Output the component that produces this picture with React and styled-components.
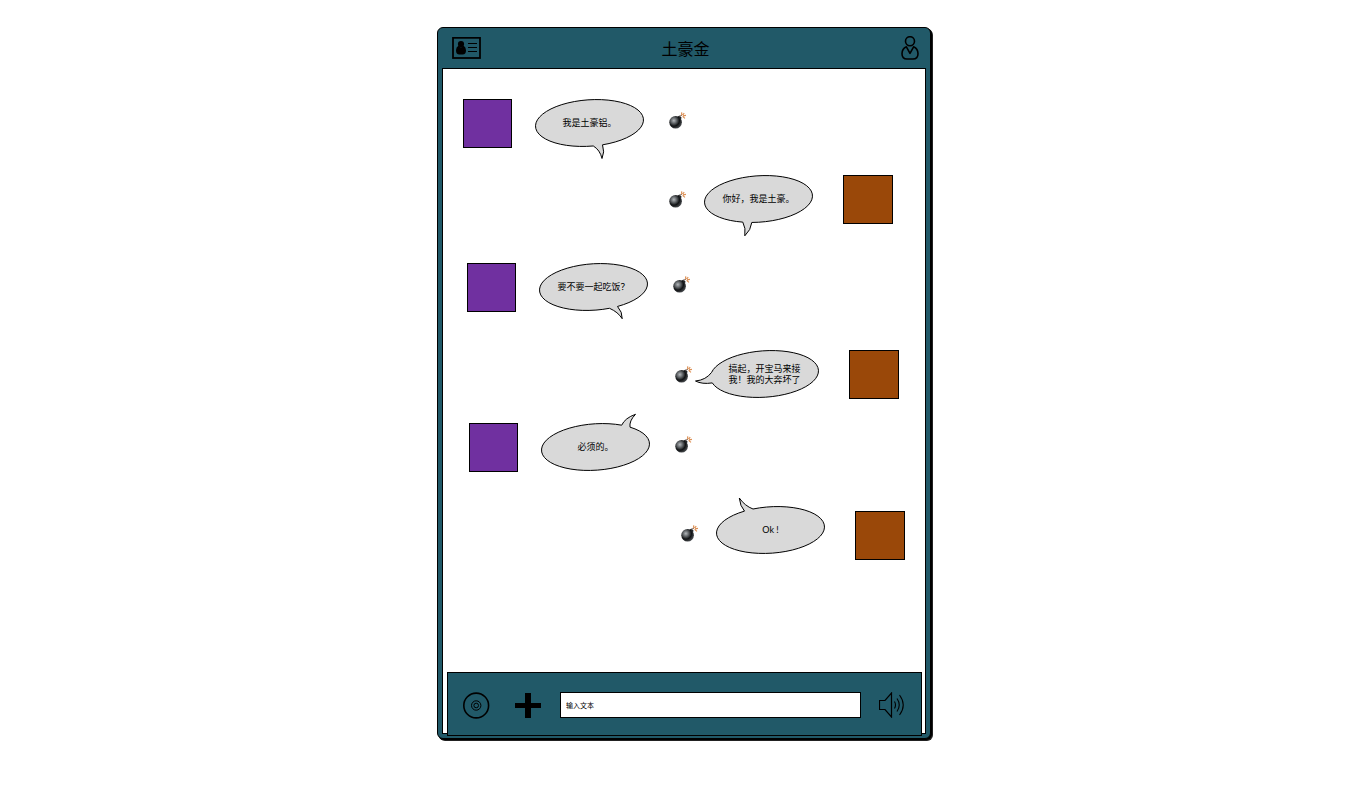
import React from "react";
import styled, { createGlobalStyle } from "styled-components";

const TEAL = "#215968";

const GlobalStyle = createGlobalStyle`
  * { box-sizing: border-box; }
  body {
    margin: 0;
    background: #fff;
    color: #000;
    font-family: "Noto Sans CJK SC", sans-serif;
  }
`;

const Page = styled.main`
  display: flex;
  justify-content: center;
  padding: 27px 0 27px 2px;
`;

const Phone = styled.section`
  display: flex;
  flex-direction: column;
  width: 100%;
  max-width: 494px;
  min-height: 712px;
  padding: 0 4px 4px;
  background: ${TEAL};
  border: 1px solid #000;
  border-radius: 6px;
  box-shadow: 1px 1px 0 #000, 2px 2px 0 #222;
`;

const Header = styled.header`
  display: grid;
  grid-template-columns: 1fr auto 1fr;
  align-items: center;
  height: 40px;
  padding: 0 7px 0 10px;
  button:last-child { justify-self: end; }
`;

const Title = styled.h1`
  margin: 0;
  font-size: 16px;
  line-height: 24px;
  font-weight: 400;
`;

const IconButton = styled.button`
  display: flex;
  flex: none;
  padding: 0;
  border: 0;
  background: none;
  color: #000;
  cursor: pointer;
  svg { display: block; }
`;

const Screen = styled.div`
  display: flex;
  flex: 1;
  flex-direction: column;
  background: #fff;
  border: 1px solid #000;
`;

const Messages = styled.ol`
  flex: 1;
  margin: 0;
  padding: 30px 20px 24px;
  list-style: none;
`;

const Row = styled.li`
  display: flex;
  flex-direction: ${(p) => (p.$mine ? "row-reverse" : "row")};
  align-items: flex-start;
  height: ${(p) => (p.$tall ? 54 : 49)}px;
  margin-top: ${(p) => p.$space}px;
  padding: ${(p) => (p.$mine ? `0 ${p.$inset}px 0 0` : `0 0 0 ${p.$inset}px`)};
`;

const Avatar = styled.div`
  flex: none;
  align-self: ${(p) => (p.$mine ? "flex-end" : "flex-start")};
  width: ${(p) => (p.$mine ? 50 : 49)}px;
  height: 49px;
  background: ${(p) => (p.$mine ? "#9a4809" : "#7030a0")};
  border: 1px solid #000;
`;

const Bubble = styled.div`
  position: relative;
  display: flex;
  flex: none;
  align-items: center;
  justify-content: center;
  width: 109px;
  height: 47px;
  margin: ${(p) => (p.$mine ? "0 30px 0 18px" : "0 25px 0 23px")};
`;

const BubbleShape = styled.svg`
  position: absolute;
  inset: 0;
  overflow: visible;
`;

const BubbleText = styled.p`
  position: relative;
  margin: 0;
  font-family: Lato, "Noto Sans CJK SC", sans-serif;
  font-size: 9px;
  line-height: 11px;
  white-space: pre-line;
`;

const BombSlot = styled.div`
  flex: none;
  align-self: ${(p) => (p.$mine ? "center" : "flex-start")};
  padding-top: ${(p) => (p.$mine ? 0 : 13)}px;
  svg { display: block; }
`;

const Composer = styled.form`
  position: relative;
  display: flex;
  align-items: center;
  height: 64px;
  margin: 0 3px -3px 4px;
  padding: 2px 16px 0 15px;
  background: ${TEAL};
  border: 1px solid #000;
`;

const Tools = styled.div`
  display: flex;
  align-items: center;
  gap: 25px;
`;

const TextBox = styled.input`
  flex: 1;
  min-width: 0;
  height: 26px;
  margin: 0 18px 0 19px;
  padding: 0 5px;
  border: 1px solid #000;
  border-radius: 0;
  background: #fff;
  color: #000;
  font: 7px "Noto Sans CJK SC", sans-serif;
  &::placeholder { color: #000; opacity: 1; }
`;

const MESSAGES = [
  { text: "我是土豪铝。", inset: 0, space: 0,
    tail: { side: 1, from: 58.3, to: 67.5, curve: "Q70 53 67 59.5Q65 51" } },
  { text: "你好，我是土豪。", mine: true, inset: 12, space: 27,
    tail: { side: 1, from: 38.8, to: 47.8, curve: "Q47 55 40.8 60.8Q42 53" } },
  { text: "要不要一起吃饭？", inset: 4, space: 39,
    tail: { side: 1, from: 70.5, to: 78.5, curve: "Q83.5 49 83.2 55.7Q79 49" } },
  { text: "搞起，开宝马来接\n我！我的大奔坏了", mine: true, inset: 6, space: 38,
    tail: { side: -1, endSide: 1, from: 1.6, to: 2.3, curve: "Q-8 34.5 -14.5 31Q-4 30" } },
  { text: "必须的。", inset: 6, space: 24,
    tail: { side: -1, from: 89, to: 80.7, curve: "Q84 -5 94.5 -8.7Q88 -2" } },
  { text: "Ok !", mine: true, tall: true, inset: 0, space: 34,
    tail: { side: -1, from: 37, to: 28.5, curve: "Q24 0 23.3 -8Q29 0" } },
];

/* Slightly tilted ellipse, open between the two feet of its tail. */
const CENTER = { x: 54.5, y: 24 };
const HALF_WIDTH = 54.1;
const HALF_HEIGHT = 23.2;
const TILT = 4;

function edgeY(x, side) {
  const t = (TILT * Math.PI) / 180;
  const a2 = HALF_WIDTH ** 2;
  const b2 = HALF_HEIGHT ** 2;
  const w2 = a2 * Math.cos(t) ** 2 + b2 * Math.sin(t) ** 2;
  const dx = x - CENTER.x;
  const skew = ((a2 - b2) * Math.sin(t) * Math.cos(t)) / w2;
  const reach = HALF_WIDTH * HALF_HEIGHT * Math.sqrt(Math.max(0, w2 - dx * dx)) / w2;
  return CENTER.y - skew * dx + side * reach;
}

function bubblePath({ side, endSide = side, from, to, curve }) {
  const startY = edgeY(from, side);
  const endY = edgeY(to, endSide);
  return `M${from} ${startY}A${HALF_WIDTH} ${HALF_HEIGHT} ${-TILT} 1 1 ${to} ${endY}${curve} ${from} ${startY}Z`;
}

function BombIcon({ id }) {
  return (
    <svg width="17" height="17" viewBox="0 0 17 17" aria-hidden="true">
      <defs>
        <radialGradient id={id} cx="0.36" cy="0.36" r="0.68">
          <stop offset="0" stopColor="#b4b8bc" />
          <stop offset="0.35" stopColor="#5d6164" />
          <stop offset="0.65" stopColor="#101214" />
          <stop offset="1" stopColor="#4a4d50" />
        </radialGradient>
      </defs>
      <path d="M8.6 4.4L10.6 3.6L12.6 5.8L11.8 7.6Z" fill="#222629" />
      <circle cx="6.6" cy="10.3" r="6.3" fill={`url(#${id})`} />
      <path d="M10.6 4.4Q11.5 2.8 13 3.6" fill="none" stroke="#8a7068" />
      <path d="M12.8 3.4L12.6 0.4M13.8 3L15.2 1.2M14 3.8L17 3.4M13.6 4.4L16 6.4" stroke="#dc9055" strokeWidth="1.2" />
    </svg>
  );
}

function ContactCardIcon() {
  return (
    <svg width="29" height="22" viewBox="0 0 29 22" aria-hidden="true">
      <rect x="1" y="0.8" width="27" height="20.2" fill="none" stroke="currentColor" strokeWidth="1.8" />
      <circle cx="9" cy="7" r="3.1" fill="currentColor" />
      <path d="M6.6 8.6Q4 10.2 4 13.3Q4 17.6 7.4 17.6H10.6Q14 17.6 14 13.3Q14 10.2 11.4 8.6L9 10.4Z" fill="currentColor" />
      <path d="M16 6.5H25M16 10.5H25M16 14.5H25" stroke="currentColor" />
    </svg>
  );
}

function PersonIcon() {
  return (
    <svg width="18" height="25" viewBox="0 0 18 25" fill="none" stroke="currentColor" strokeWidth="1.6" aria-hidden="true">
      <circle cx="9" cy="5.2" r="4.5" />
      <path d="M5.4 10.8Q1 12.8 1 17.8Q1 23 6 23H12Q17 23 17 17.8Q17 12.8 12.6 10.8L9 17.3Z" strokeLinejoin="round" />
    </svg>
  );
}

function VoiceIcon() {
  return (
    <svg width="27" height="27" viewBox="0 0 27 27" fill="none" stroke="currentColor" aria-hidden="true">
      <circle cx="13.2" cy="13.5" r="12.4" strokeWidth="1.6" />
      <circle cx="13.2" cy="13.5" r="4.7" />
      <circle cx="13.2" cy="13.5" r="2.3" />
    </svg>
  );
}

function PlusIcon() {
  return (
    <svg width="26" height="25" viewBox="0 0 26 25" aria-hidden="true">
      <path d="M10 0H16V10H26V15H16V25H10V15H0V10H10Z" fill="currentColor" />
    </svg>
  );
}

function SpeakerIcon() {
  return (
    <svg width="26" height="26" viewBox="0 0 26 26" fill="none" stroke="currentColor" aria-hidden="true">
      <path d="M0.5 8.5H6L12.5 1V25L6 17.5H0.5Z" strokeWidth="1.2" />
      <path d="M15.5 9.5Q17.5 13 15.5 16.5M18 6.5Q22.5 13 18 19.5M20.5 3Q28 13 20.5 23" strokeWidth="1.1" />
    </svg>
  );
}

function Message({ message, index }) {
  const { mine, text, tail, inset, space, tall } = message;
  return (
    <Row $mine={mine} $inset={inset} $space={space} $tall={tall}>
      <Avatar $mine={mine} />
      <Bubble $mine={mine}>
        <BubbleShape width="109" height="47" viewBox="0 0 109 47" aria-hidden="true">
          <path d={bubblePath(tail)} fill="#d9d9d9" stroke="#000" strokeLinejoin="round" />
        </BubbleShape>
        <BubbleText>{text}</BubbleText>
      </Bubble>
      <BombSlot $mine={mine}>
        <BombIcon id={`bomb-${index}`} />
      </BombSlot>
    </Row>
  );
}

export default function App() {
  return (
    <Page>
      <GlobalStyle />
      <Phone>
        <Header>
          <IconButton type="button" aria-label="联系人"><ContactCardIcon /></IconButton>
          <Title>土豪金</Title>
          <IconButton type="button" aria-label="个人资料"><PersonIcon /></IconButton>
        </Header>
        <Screen>
          <Messages>
            {MESSAGES.map((message, index) => (
              <Message key={message.text} message={message} index={index} />
            ))}
          </Messages>
          <Composer onSubmit={(event) => event.preventDefault()}>
            <Tools>
              <IconButton type="button" aria-label="语音"><VoiceIcon /></IconButton>
              <IconButton type="button" aria-label="添加"><PlusIcon /></IconButton>
            </Tools>
            <TextBox type="text" aria-label="输入文本" placeholder="输入文本" />
            <IconButton type="button" aria-label="声音"><SpeakerIcon /></IconButton>
          </Composer>
        </Screen>
      </Phone>
    </Page>
  );
}
